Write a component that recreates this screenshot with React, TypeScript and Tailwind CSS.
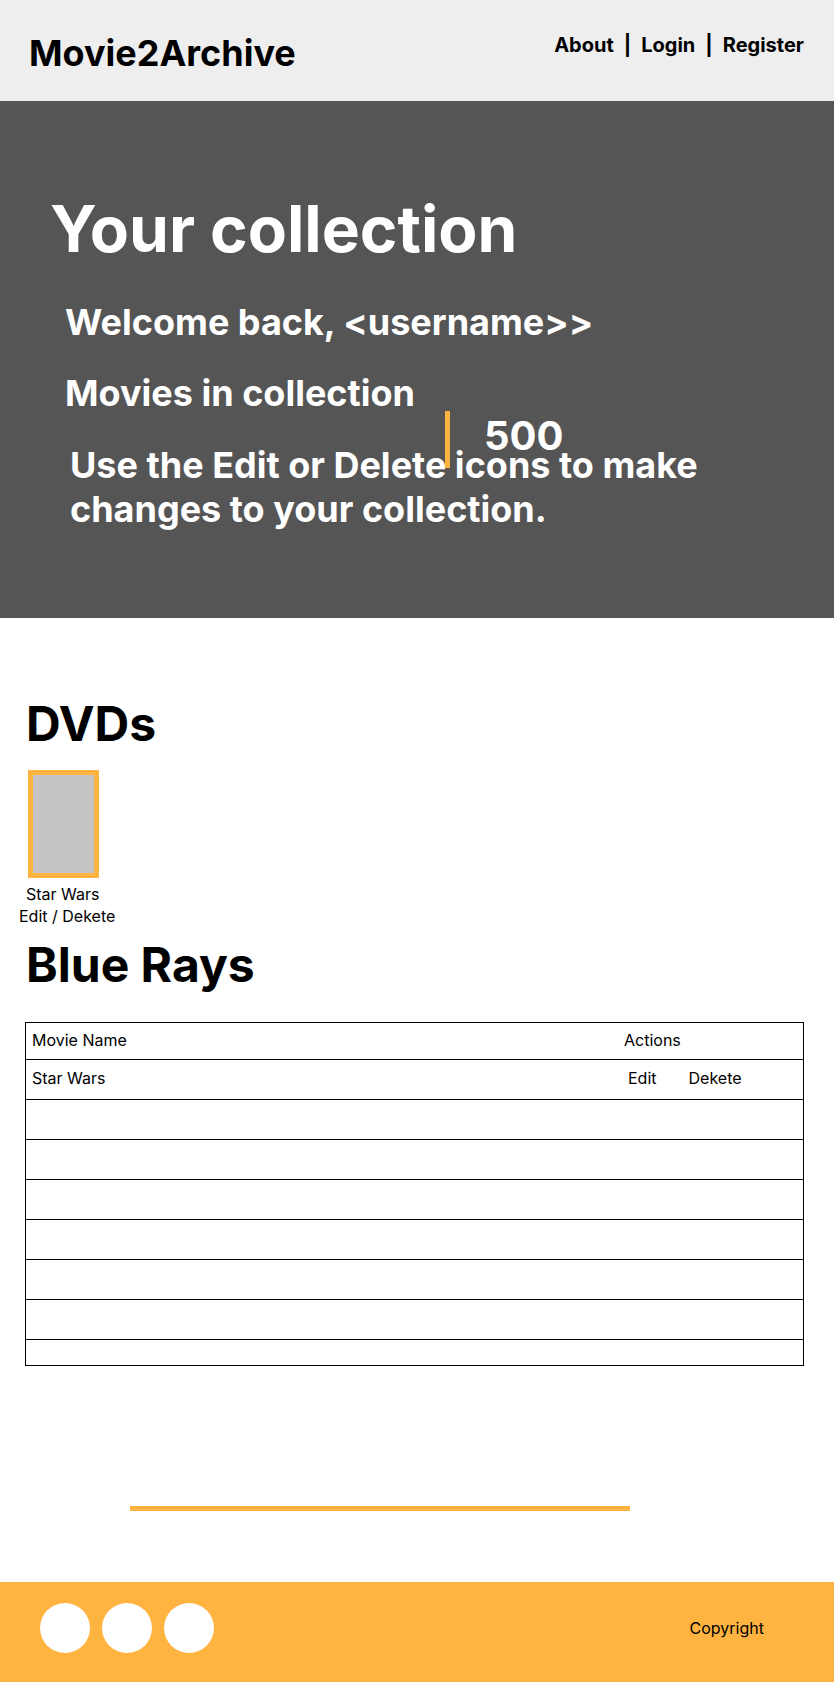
import React from "react";

const emptyRows = ["h-10", "h-10", "h-10", "h-10", "h-10", "h-10"];
const socialLinks = ["Facebook", "Twitter", "Instagram"];

function Header() {
  return (
    <header className="flex items-start justify-between bg-[#eeeeee] pt-[31px] pr-[30px] pb-[26px] pl-[29px]">
      <a href="#home" className="text-4xl leading-[44px] font-bold">
        Movie2Archive
      </a>
      <nav className="flex gap-2.5 pt-0.5 text-xl leading-6 font-bold">
        <a href="#about">About</a>
        <span>|</span>
        <a href="#login">Login</a>
        <span>|</span>
        <a href="#register">Register</a>
      </nav>
    </header>
  );
}

function Hero() {
  return (
    <section className="relative bg-[#555555] pt-[89px] pr-8 pb-[87px] pl-[50px] font-bold text-white">
      <h1 className="text-[64px] leading-[77px]">Your collection</h1>
      <div className="pl-[15px] text-4xl leading-[44px]">
        <p className="mt-[33px]">Welcome back, &lt;username&gt;&gt;</p>
        <p className="mt-[27px]">Movies in collection</p>
        <p className="mt-7 max-w-[680px] pl-[5px]">
          Use the Edit or Delete icons to make changes to your collection.
        </p>
      </div>
      <div className="absolute top-[310px] left-[445px] h-[57px] border-l-[5px] border-[#ffb340] pl-[34px] text-[40px] leading-[50px]">
        500
      </div>
    </section>
  );
}

function Dvds() {
  return (
    <section className="pt-[77px]">
      <h2 className="pl-[26px] text-5xl leading-[58px] font-bold">DVDs</h2>
      <div className="mt-[17px] pl-[19px] leading-[22px]">
        <div className="ml-[9px] h-[108px] w-[71px] border-5 border-[#ffb340] bg-[#c4c4c4]" />
        <p className="mt-[5px] pl-[7px]">Star Wars</p>
        <p>
          <a href="#edit">Edit</a> / <a href="#delete">Dekete</a>
        </p>
      </div>
    </section>
  );
}

function BlueRays() {
  return (
    <section className="pt-[9px] pr-[30px] pl-[25px]">
      <h2 className="pl-px text-5xl leading-[58px] font-bold">Blue Rays</h2>
      <table className="mt-7 w-full table-fixed border-separate border-spacing-0 border border-black text-left leading-5">
        <colgroup>
          <col />
          <col className="w-[179px]" />
        </colgroup>
        <thead>
          <tr className="h-[37px]">
            <th className="border-b border-black pt-[7px] pl-1.5 align-top font-normal">Movie Name</th>
            <th className="border-b border-black pt-[7px] align-top font-normal">Actions</th>
          </tr>
        </thead>
        <tbody>
          <tr className="h-10">
            <td className="border-b border-black pt-2 pl-1.5 align-top">Star Wars</td>
            <td className="border-b border-black pt-2 pl-1 align-top">
              <div className="flex gap-8">
                <button type="button">Edit</button>
                <button type="button">Dekete</button>
              </div>
            </td>
          </tr>
          {emptyRows.map((height, i) => (
            <tr key={i} className={height}>
              <td className="border-b border-black" />
              <td className="border-b border-black" />
            </tr>
          ))}
          <tr className="h-[25px]">
            <td />
            <td />
          </tr>
        </tbody>
      </table>
    </section>
  );
}

function Footer() {
  return (
    <footer className="flex items-center justify-between bg-[#ffb340] pt-[21px] pr-[70px] pb-[29px] pl-10">
      <div className="flex gap-3">
        {socialLinks.map((name) => (
          <a key={name} href="#social" aria-label={name} className="size-[50px] rounded-full bg-white" />
        ))}
      </div>
      <p className="leading-[22px]">Copyright</p>
    </footer>
  );
}

export default function App() {
  return (
    <div className="min-h-screen bg-white font-['Inter',sans-serif] text-base text-black">
      <Header />
      <Hero />
      <main>
        <Dvds />
        <BlueRays />
        <hr className="mt-[140px] mr-[204px] mb-[71px] ml-[130px] h-[5px] border-0 bg-[#ffb340]" />
      </main>
      <Footer />
    </div>
  );
}
